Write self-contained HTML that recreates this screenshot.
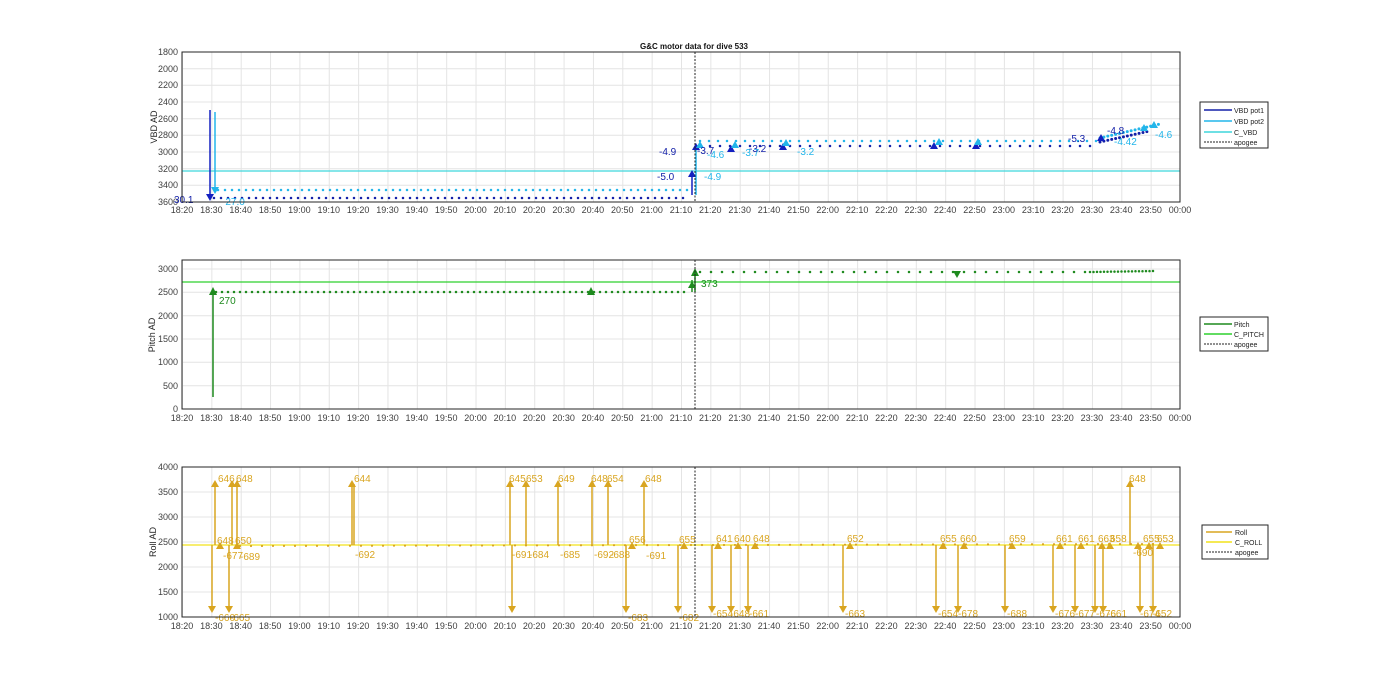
<!DOCTYPE html>
<html><head><meta charset="utf-8"><style>
html,body{margin:0;padding:0;background:#fff;width:1400px;height:693px;overflow:hidden}
svg{display:block;font-family:"Liberation Sans",Arial,sans-serif}
</style></head><body>
<svg width="1400" height="693" viewBox="0 0 1400 693" xmlns="http://www.w3.org/2000/svg">
<defs>
<pattern id="vg" x="182" y="0" width="29.353" height="10" patternUnits="userSpaceOnUse"><rect x="0" y="0" width="1" height="10" fill="#e4e4e4"/></pattern>
<g id="xl" font-size="9" fill="#404040" text-anchor="middle">
<text x="182">18:20</text><text x="211.4">18:30</text><text x="240.7">18:40</text><text x="270.1">18:50</text><text x="299.4">19:00</text><text x="328.8">19:10</text><text x="358.1">19:20</text><text x="387.5">19:30</text><text x="416.8">19:40</text><text x="446.2">19:50</text><text x="475.5">20:00</text><text x="504.9">20:10</text><text x="534.2">20:20</text><text x="563.6">20:30</text><text x="592.9">20:40</text><text x="622.3">20:50</text><text x="651.6">21:00</text><text x="681">21:10</text><text x="710.3">21:20</text><text x="739.7">21:30</text><text x="769">21:40</text><text x="798.4">21:50</text><text x="827.7">22:00</text><text x="857.1">22:10</text><text x="886.4">22:20</text><text x="915.8">22:30</text><text x="945.1">22:40</text><text x="974.5">22:50</text><text x="1003.8">23:00</text><text x="1033.2">23:10</text><text x="1062.5">23:20</text><text x="1091.9">23:30</text><text x="1121.2">23:40</text><text x="1150.6">23:50</text><text x="1180">00:00</text>
</g>
</defs>

<text x="694" y="49" font-size="8" font-weight="bold" text-anchor="middle" fill="#111">G&amp;C motor data for dive 533</text>

<!-- TOP AXES -->
<rect x="182" y="52" width="998" height="150" fill="url(#vg)"/>
<g stroke="#e4e4e4" stroke-width="1">
<path d="M182 68.7H1180M182 85.3H1180M182 102H1180M182 118.7H1180M182 135.3H1180M182 152H1180M182 168.7H1180M182 185.3H1180"/>
</g>
<g font-size="9" fill="#404040" text-anchor="end">
<text x="178" y="55">1800</text><text x="178" y="72">2000</text><text x="178" y="88">2200</text><text x="178" y="105">2400</text><text x="178" y="122">2600</text><text x="178" y="138">2800</text><text x="178" y="155">3000</text><text x="178" y="172">3200</text><text x="178" y="188">3400</text><text x="178" y="205">3600</text>
</g>
<text transform="translate(157 127) rotate(-90)" font-size="9" fill="#262626" text-anchor="middle">VBD AD</text>
<use href="#xl" y="213"/>
<line x1="182" y1="171" x2="1180" y2="171" stroke="#3fd6dc" stroke-width="1.2"/>
<g stroke-linecap="round" fill="none">
<line x1="218" y1="190" x2="690" y2="190" stroke="#22b5ea" stroke-width="2.5" stroke-dasharray="0 7"/>
<line x1="214" y1="198" x2="690" y2="198" stroke="#1320a8" stroke-width="2.5" stroke-dasharray="0 7"/>
<line x1="700" y1="141" x2="1100" y2="141" stroke="#22b5ea" stroke-width="2.5" stroke-dasharray="0 9"/>
<line x1="700" y1="146" x2="1100" y2="146" stroke="#1320a8" stroke-width="2.5" stroke-dasharray="0 10"/>
<line x1="1100" y1="138" x2="1160" y2="124" stroke="#22b5ea" stroke-width="3" stroke-dasharray="0 4"/>
<line x1="1100" y1="142" x2="1150" y2="131" stroke="#1320a8" stroke-width="3" stroke-dasharray="0 4"/>
</g>
<line x1="210" y1="110" x2="210" y2="198" stroke="#1320c0" stroke-width="1.5"/>
<polygon points="206,194 214,194 210,201" fill="#1320c0"/>
<line x1="215" y1="112" x2="215" y2="190" stroke="#22b5ea" stroke-width="1.5"/>
<polygon points="211,187 219,187 215,194" fill="#22b5ea"/>
<line x1="692" y1="175" x2="692" y2="195" stroke="#1320c0" stroke-width="1.5"/>
<line x1="696" y1="148" x2="696" y2="195" stroke="#22b5ea" stroke-width="1.5"/>
<polygon points="692,150 700,150 696,143" fill="#1320c0"/>
<polygon points="688,177 696,177 692,170" fill="#1320c0"/>
<g fill="#1320c0"><polygon points="727,152 735,152 731,145"/><polygon points="779,150 787,150 783,143"/><polygon points="930,149 938,149 934,142"/><polygon points="972,149 980,149 976,142"/><polygon points="1097,141 1105,141 1101,134"/></g>
<g fill="#22b5ea"><polygon points="696,148 704,148 700,141"/><polygon points="731,148 739,148 735,141"/><polygon points="782,146 790,146 786,139"/><polygon points="935,145 943,145 939,138"/><polygon points="974,145 982,145 978,138"/><polygon points="1140,131 1148,131 1144,124"/><polygon points="1150,128 1158,128 1154,121"/></g>
<g font-size="10" fill="#1320a8"><text x="174" y="203">30.1</text><text x="659" y="155">-4.9</text><text x="657" y="180">-5.0</text><text x="697" y="154">-3.7</text><text x="749" y="152">-3.2</text><text x="1068" y="142">-5.3</text><text x="1107" y="134">-4.8</text></g>
<g font-size="10" fill="#22b5ea"><text x="707" y="158">-4.6</text><text x="704" y="180">-4.9</text><text x="742" y="156">-3.7</text><text x="797" y="155">-3.2</text><text x="1114" y="145">-4.42</text><text x="1155" y="138">-4.6</text><text x="222" y="205">-27.0</text></g>
<rect x="182" y="52" width="998" height="150" fill="none" stroke="#262626" stroke-width="1"/>
<line x1="695" y1="52" x2="695" y2="202" stroke="#222" stroke-dasharray="2 1.5"/>
<!-- legend 1 -->
<rect x="1200" y="102" width="68" height="46" fill="#fff" stroke="#262626"/>
<g stroke-width="1.5"><line x1="1204" y1="110" x2="1232" y2="110" stroke="#1320a8"/><line x1="1204" y1="121" x2="1232" y2="121" stroke="#22b5ea"/><line x1="1204" y1="132" x2="1232" y2="132" stroke="#3fd6dc"/><line x1="1204" y1="142" x2="1232" y2="142" stroke="#222" stroke-width="1" stroke-dasharray="2 1"/></g>
<g font-size="7" fill="#222"><text x="1234" y="113">VBD pot1</text><text x="1234" y="124">VBD pot2</text><text x="1234" y="135">C_VBD</text><text x="1234" y="145">apogee</text></g>

<!-- MIDDLE AXES -->
<rect x="182" y="260" width="998" height="149" fill="url(#vg)"/>
<g stroke="#e4e4e4"><path d="M182 269H1180M182 292.3H1180M182 315.7H1180M182 339H1180M182 362.3H1180M182 385.7H1180"/></g>
<g font-size="9" fill="#404040" text-anchor="end">
<text x="178" y="272">3000</text><text x="178" y="295">2500</text><text x="178" y="319">2000</text><text x="178" y="342">1500</text><text x="178" y="365">1000</text><text x="178" y="389">500</text><text x="178" y="412">0</text>
</g>
<text transform="translate(155 335) rotate(-90)" font-size="9" fill="#262626" text-anchor="middle">Pitch AD</text>
<use href="#xl" y="421"/>
<line x1="182" y1="282" x2="1180" y2="282" stroke="#2fd02f" stroke-width="1.2"/>
<g stroke-linecap="round" fill="none" stroke="#1e8a1e" stroke-width="2.5">
<line x1="216" y1="292" x2="690" y2="292" stroke-dasharray="0 6"/>
<line x1="700" y1="272" x2="1090" y2="272" stroke-dasharray="0 11"/>
<line x1="1090" y1="272" x2="1156" y2="271" stroke-dasharray="0 3.5"/>
</g>
<line x1="213" y1="292" x2="213" y2="397" stroke="#1e8a1e" stroke-width="1.5"/>
<line x1="692" y1="280" x2="692" y2="292" stroke="#1e8a1e" stroke-width="1.5"/>
<line x1="695" y1="272" x2="695" y2="292" stroke="#1e8a1e" stroke-width="1.5"/>
<g fill="#1e8a1e"><polygon points="209,295 217,295 213,287"/><polygon points="587,295 595,295 591,287"/><polygon points="691,276 699,276 695,268"/><polygon points="688,288 696,288 692,281"/><polygon points="953,271 961,271 957,278"/></g>
<g font-size="10" fill="#1e8a1e"><text x="219" y="304">270</text><text x="701" y="287">373</text></g>
<rect x="182" y="260" width="998" height="149" fill="none" stroke="#262626"/>
<line x1="695" y1="260" x2="695" y2="409" stroke="#222" stroke-dasharray="2 1.5"/>
<rect x="1200" y="317" width="68" height="34" fill="#fff" stroke="#262626"/>
<line x1="1204" y1="324" x2="1232" y2="324" stroke="#1e8a1e" stroke-width="1.5"/><line x1="1204" y1="334" x2="1232" y2="334" stroke="#2fd02f" stroke-width="1.5"/><line x1="1204" y1="344" x2="1232" y2="344" stroke="#222" stroke-dasharray="2 1"/>
<g font-size="7" fill="#222"><text x="1234" y="327">Pitch</text><text x="1234" y="337">C_PITCH</text><text x="1234" y="347">apogee</text></g>

<!-- BOTTOM AXES -->
<rect x="182" y="467" width="998" height="150" fill="url(#vg)"/>
<g stroke="#e4e4e4"><path d="M182 492H1180M182 517H1180M182 542H1180M182 567H1180M182 592H1180"/></g>
<g font-size="9" fill="#404040" text-anchor="end">
<text x="178" y="470">4000</text><text x="178" y="495">3500</text><text x="178" y="520">3000</text><text x="178" y="545">2500</text><text x="178" y="570">2000</text><text x="178" y="595">1500</text><text x="178" y="620">1000</text>
</g>
<text transform="translate(156 542) rotate(-90)" font-size="9" fill="#262626" text-anchor="middle">Roll AD</text>
<use href="#xl" y="629"/>
<line x1="182" y1="545" x2="1180" y2="545" stroke="#f2e21a" stroke-width="1.2"/>
<line x1="240" y1="546" x2="1160" y2="544" stroke="#d9a520" stroke-width="2.2" stroke-linecap="round" stroke-dasharray="0 11" fill="none"/>
<g stroke="#d9a520" stroke-width="1.5" fill="none">
<path d="M212 545V610M215 545V484M229 545V610M232 545V484M237 545V484M352 545V484M354 545V484M510 545V484M512 545V610M526 545V484M528 545V545M558 545V484M560 545V545M592 545V484M594 545V545M608 545V484M610 545V545M626 545V610M628 545V545M644 545V484M646 545V545M678 545V610M680 545V545M712 545V610M714 545V545M731 545V610M733 545V545M748 545V610M750 545V545M843 545V610M845 545V545M936 545V610M938 545V545M958 545V610M960 545V545M1005 545V610M1007 545V545M1053 545V610M1055 545V545M1075 545V610M1077 545V545M1095 545V610M1097 545V545M1103 545V610M1105 545V545M1130 545V484M1132 545V545M1140 545V610M1142 545V545M1153 545V610M1155 545V545"/>
</g>
<g fill="#d9a520">
<polygon points="208,606 216,606 212,613"/><polygon points="211,487 219,487 215,480"/><polygon points="225,606 233,606 229,613"/><polygon points="228,487 236,487 232,480"/><polygon points="233,487 241,487 237,480"/><polygon points="348,487 356,487 352,480"/><polygon points="506,487 514,487 510,480"/><polygon points="508,606 516,606 512,613"/><polygon points="522,487 530,487 526,480"/><polygon points="554,487 562,487 558,480"/><polygon points="588,487 596,487 592,480"/><polygon points="604,487 612,487 608,480"/><polygon points="622,606 630,606 626,613"/><polygon points="640,487 648,487 644,480"/><polygon points="674,606 682,606 678,613"/><polygon points="708,606 716,606 712,613"/><polygon points="727,606 735,606 731,613"/><polygon points="744,606 752,606 748,613"/><polygon points="839,606 847,606 843,613"/><polygon points="932,606 940,606 936,613"/><polygon points="954,606 962,606 958,613"/><polygon points="1001,606 1009,606 1005,613"/><polygon points="1049,606 1057,606 1053,613"/><polygon points="1071,606 1079,606 1075,613"/><polygon points="1091,606 1099,606 1095,613"/><polygon points="1099,606 1107,606 1103,613"/><polygon points="1126,487 1134,487 1130,480"/><polygon points="1136,606 1144,606 1140,613"/><polygon points="1149,606 1157,606 1153,613"/>
<polygon points="216,549 224,549 220,542"/><polygon points="233,549 241,549 237,542"/><polygon points="628,549 636,549 632,542"/><polygon points="680,549 688,549 684,542"/><polygon points="714,549 722,549 718,542"/><polygon points="734,549 742,549 738,542"/><polygon points="751,549 759,549 755,542"/><polygon points="846,549 854,549 850,542"/><polygon points="939,549 947,549 943,542"/><polygon points="960,549 968,549 964,542"/><polygon points="1008,549 1016,549 1012,542"/><polygon points="1056,549 1064,549 1060,542"/><polygon points="1077,549 1085,549 1081,542"/><polygon points="1098,549 1106,549 1102,542"/><polygon points="1106,549 1114,549 1110,542"/><polygon points="1134,549 1142,549 1138,542"/><polygon points="1145,549 1153,549 1149,542"/><polygon points="1156,549 1164,549 1160,542"/>
</g>
<g font-size="10" fill="#d9a520">
<text x="218" y="482">646</text><text x="236" y="482">648</text><text x="217" y="544">648</text><text x="235" y="544">650</text><text x="223" y="559">-677</text><text x="240" y="560">-689</text><text x="215" y="621">-660</text><text x="230" y="621">-665</text>
<text x="354" y="482">644</text><text x="355" y="558">-692</text>
<text x="509" y="482">645</text><text x="526" y="482">653</text><text x="512" y="558">-691</text><text x="529" y="558">-684</text>
<text x="558" y="482">649</text><text x="560" y="558">-685</text><text x="591" y="482">648</text><text x="607" y="482">654</text><text x="594" y="558">-692</text><text x="610" y="558">-688</text>
<text x="629" y="543">656</text><text x="628" y="621">-683</text><text x="645" y="482">648</text><text x="646" y="559">-691</text><text x="679" y="543">655</text><text x="679" y="621">-682</text>
<text x="716" y="542">641</text><text x="734" y="542">640</text><text x="753" y="542">648</text><text x="713" y="617">-654</text><text x="730" y="617">-648</text><text x="749" y="617">-661</text>
<text x="847" y="542">652</text><text x="845" y="617">-663</text><text x="940" y="542">655</text><text x="960" y="542">660</text><text x="938" y="617">-654</text><text x="958" y="617">-678</text>
<text x="1009" y="542">659</text><text x="1007" y="617">-688</text><text x="1056" y="542">661</text><text x="1078" y="542">661</text><text x="1098" y="542">663</text><text x="1110" y="542">658</text><text x="1055" y="617">-676</text><text x="1075" y="617">-677</text><text x="1096" y="617">-676</text><text x="1107" y="617">-661</text>
<text x="1129" y="482">648</text><text x="1143" y="542">655</text><text x="1157" y="542">653</text><text x="1133" y="556">-690</text><text x="1140" y="617">-674</text><text x="1152" y="617">-652</text>
</g>
<rect x="182" y="467" width="998" height="150" fill="none" stroke="#262626"/>
<line x1="695" y1="467" x2="695" y2="617" stroke="#222" stroke-dasharray="2 1.5"/>
<rect x="1202" y="525" width="66" height="34" fill="#fff" stroke="#262626"/>
<line x1="1206" y1="532" x2="1232" y2="532" stroke="#d9a520" stroke-width="1.5"/><line x1="1206" y1="542" x2="1232" y2="542" stroke="#f2e21a" stroke-width="1.5"/><line x1="1206" y1="552" x2="1232" y2="552" stroke="#222" stroke-dasharray="2 1"/>
<g font-size="7" fill="#222"><text x="1235" y="535">Roll</text><text x="1235" y="545">C_ROLL</text><text x="1235" y="555">apogee</text></g>
</svg>
</body></html>
